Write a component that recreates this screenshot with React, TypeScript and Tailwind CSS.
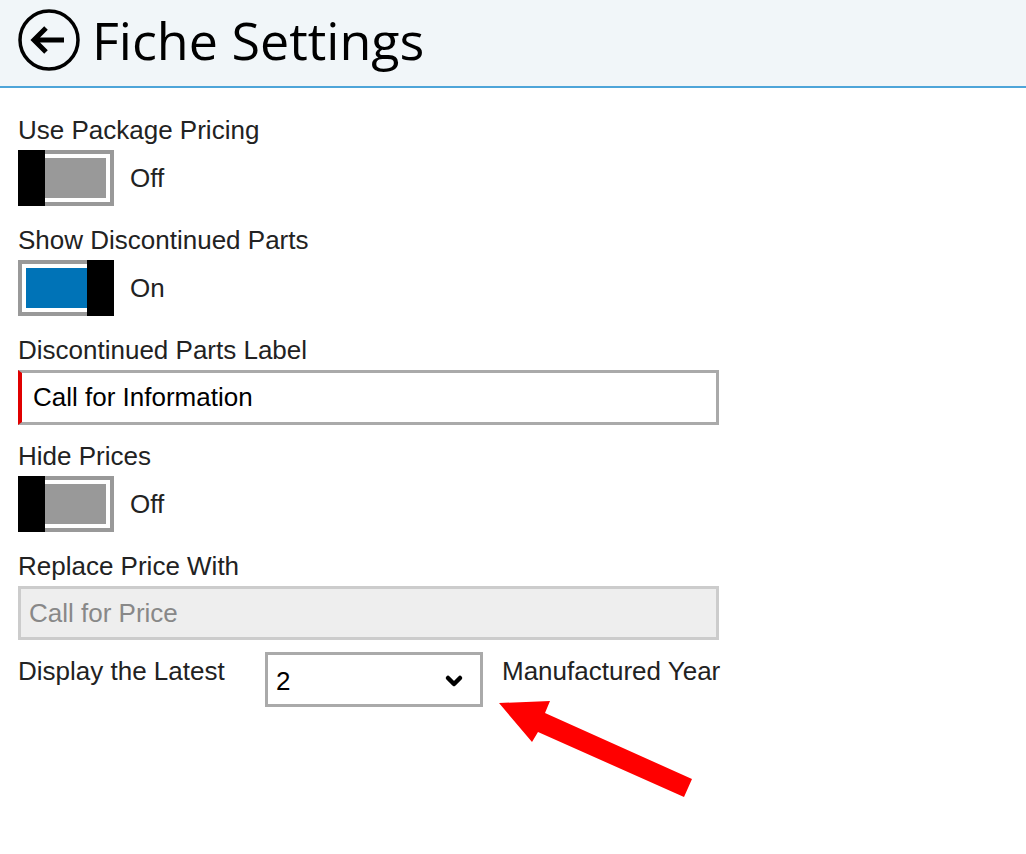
import { ChevronDown } from 'lucide-react';

function Toggle({ on }: { on: boolean }) {
  return (
    <div className="flex items-center">
      <div className="relative w-[96px] h-[56px] border-[4px] border-[#999999] bg-white p-[4px]">
        <div className={`w-full h-full ${on ? 'bg-[#0073b7]' : 'bg-[#999999]'}`} />
        <div
          className={`absolute top-[-4px] bottom-[-4px] w-[27px] bg-black ${on ? 'right-[-4px]' : 'left-[-4px]'}`}
        />
      </div>
      <span className="ml-[16px] text-[26px] text-[#222]">{on ? 'On' : 'Off'}</span>
    </div>
  );
}

function Field({ label, children }: { label: string; children: React.ReactNode }) {
  return (
    <div className="flex flex-col">
      <label className="text-[26px] leading-[28px] text-[#222]">{label}</label>
      <div className="mt-[6px]">{children}</div>
    </div>
  );
}

export default function App() {
  return (
    <div
      className="relative min-h-[854px] w-full bg-white"
      style={{ fontFamily: '"Liberation Sans", Arial, sans-serif' }}
    >
      {/* Header */}
      <div className="h-[88px] bg-[#f1f6f9] border-b-2 border-[#4ea5d9] flex items-center pl-[18px]">
        <svg width="62" height="62" viewBox="0 0 62 62" className="mt-[-6px]">
          <circle cx="31" cy="31" r="29" fill="none" stroke="#000" strokeWidth="3.5" />
          <path d="M46 31 H16 M28 19 L16 31 L28 43" fill="none" stroke="#000" strokeWidth="5" strokeLinejoin="miter" />
        </svg>
        <h1
          className="ml-[12px] mt-[-6px] text-[52px] text-black"
          style={{ fontFamily: '"Open Sans", sans-serif' }}
        >
          Fiche Settings
        </h1>
      </div>

      {/* Settings */}
      <div className="flex flex-col gap-[20px] px-[18px] pt-[28px] w-[737px]">
        <Field label="Use Package Pricing">
          <Toggle on={false} />
        </Field>
        <Field label="Show Discontinued Parts">
          <Toggle on={true} />
        </Field>
        <Field label="Discontinued Parts Label">
          <div className="mb-[-3px] h-[55px] border-[3px] border-[#aaaaaa] border-l-[4px] border-l-[#e00000] flex items-center pl-[11px] text-[26px] text-black">
            Call for Information
          </div>
        </Field>
        <Field label="Hide Prices">
          <Toggle on={false} />
        </Field>
        <Field label="Replace Price With">
          <div className="h-[54px] border-[3px] border-[#cccccc] bg-[#eeeeee] flex items-center pl-[8px] text-[26px] text-[#888888]">
            Call for Price
          </div>
        </Field>
        <div className="flex items-start mt-[-8px]">
          <span className="shrink-0 text-[26px] leading-[28px] text-[#222] mt-[5px] w-[247px]">Display the Latest</span>
          <div className="shrink-0 w-[218px] h-[55px] border-[3px] border-[#aaaaaa] flex items-center justify-between pl-[8px] pr-[14px] text-[26px] text-black">
            <span className="mt-[4px]">2</span>
            <ChevronDown size={24} strokeWidth={4.5} className="mt-[2px]" />
          </div>
          <span className="shrink-0 whitespace-nowrap ml-[19px] text-[26px] leading-[28px] text-[#222] mt-[5px]">
            Manufactured Year
          </span>
        </div>
      </div>

      {/* Annotation arrow */}
      <svg className="absolute left-0 top-0 pointer-events-none" width="1026" height="854">
        <polygon
          points="499,703 550,701 545,713 692,779 684,797 538,732 532,742"
          fill="#ff0000"
        />
      </svg>
    </div>
  );
}
